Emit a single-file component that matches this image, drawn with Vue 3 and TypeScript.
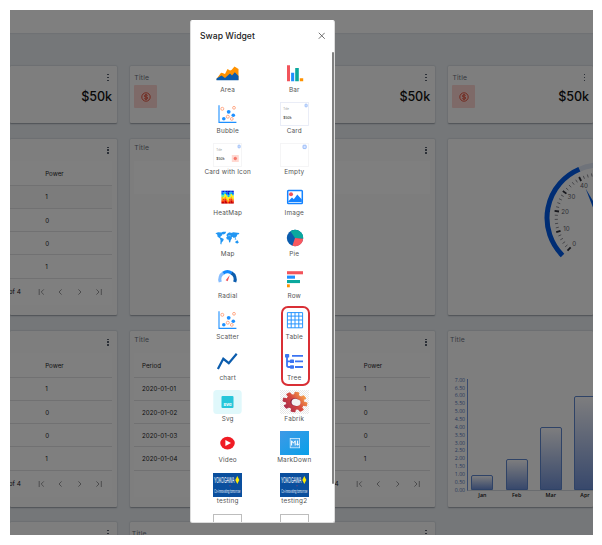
<script setup lang="ts">
interface Widget { kind: string; label: string }

const widgets: Widget[] = [
  { kind: 'area', label: 'Area' }, { kind: 'bar', label: 'Bar' },
  { kind: 'scatter', label: 'Bubble' }, { kind: 'card', label: 'Card' },
  { kind: 'cardicon', label: 'Card with Icon' }, { kind: 'empty', label: 'Empty' },
  { kind: 'heat', label: 'HeatMap' }, { kind: 'image', label: 'Image' },
  { kind: 'map', label: 'Map' }, { kind: 'pie', label: 'Pie' },
  { kind: 'radial', label: 'Radial' }, { kind: 'row', label: 'Row' },
  { kind: 'scatter', label: 'Scatter' }, { kind: 'table', label: 'Table' },
  { kind: 'chart', label: 'chart' }, { kind: 'tree', label: 'Tree' },
  { kind: 'svg', label: 'Svg' }, { kind: 'gear', label: 'Fabrik' },
  { kind: 'video', label: 'Video' }, { kind: 'md', label: 'MarkDown' },
  { kind: 'yoko', label: 'testing' }, { kind: 'yoko', label: 'testing2' },
  { kind: 'frame', label: '' }, { kind: 'frame', label: '' },
]

const rows = [
  ['2020-01-01', '1'], ['2020-01-02', '0'], ['2020-01-03', '0'], ['2020-01-04', '1'],
]
const tables = [
  { id: 't1', full: false, area: 'r2c1' },
  { id: 't2', full: false, area: 'r3c1' },
  { id: 't3', full: true, area: 'r3c2' },
]
const stats = [
  { area: 'r1c1', full: false },
  { area: 'r1c2', full: true },
  { area: 'r1c3', full: true },
]

const axis = Array.from({ length: 15 }, (_, i) => (7 - i * 0.5).toFixed(2))
const months = [
  { name: 'Jan', v: 1 }, { name: 'Feb', v: 2 }, { name: 'Mar', v: 4 }, { name: 'Apr', v: 6 },
]

const polar = (v: number, r: number) => {
  const a = ((135 + v * 2.7) * Math.PI) / 180
  return { x: 152 + r * Math.cos(a), y: 79 + r * Math.sin(a) }
}
const arc = (from: number, to: number, r: number) => {
  const a = polar(from, r)
  const b = polar(to, r)
  return `M${a.x} ${a.y}A${r} ${r} 0 ${to - from > 66 ? 1 : 0} 1 ${b.x} ${b.y}`
}
const ticks = Array.from({ length: 51 }, (_, i) => {
  const major = i % 5 === 0
  const a = polar(i * 2, major ? 41.5 : 42.2)
  const b = polar(i * 2, major ? 46 : 45.3)
  return { major, a, b }
})
const marks = [0, 10, 20, 30, 40].map((n) => ({ n, p: polar(n, n === 0 ? 36.5 : 35.3) }))

const heatColors = ['#0018c8', '#0050ff', '#00b8e8', '#70f080', '#ffee00', '#ffa000', '#ff3800', '#c80000']
const heat = Array.from({ length: 64 }, (_, i) => {
  const x = i % 8
  const y = Math.floor(i / 8)
  const shift = [0, 0, 1, 0, -1, 0, 1, 0][x] + ((x * 5 + y * 3) % 4 === 0 ? 1 : 0)
  return { x: 8.4 + x * 1.53, y: 5.7 + y * 1.6, c: heatColors[Math.max(0, Math.min(7, y + shift))] }
})
</script>

<template>
  <main class="shot">
    <header class="topbar"></header>
    <section class="board">
      <article v-for="s in stats" :key="s.area" class="card stat" :class="s.area">
        <div class="head"><span v-if="s.full" class="title">Title</span><span class="dots"><i /><i /><i /></span></div>
        <div class="stat-body">
          <div v-if="s.full" class="coin">
            <svg viewBox="0 0 10 10"><circle cx="5" cy="5" r="4.2" /><path d="M6.7 3.6Q6.3 2.8 5 2.8T3.4 3.9T5 5T6.7 6.1T5 7.2T3.3 6.3M5 2V8" /></svg>
          </div>
          <strong>$50k</strong>
        </div>
      </article>

      <article v-for="t in tables" :key="t.id" class="card grid-card" :class="[t.area, { partial: !t.full }]">
        <div class="head tall"><span v-if="t.full" class="title">Title</span><span class="dots"><i /><i /><i /></span></div>
        <div class="panel">
          <div class="tr th"><span v-if="t.full">Period</span><span>Power</span></div>
          <div v-for="r in rows" :key="r[0]" class="tr"><span v-if="t.full">{{ r[0] }}</span><span>{{ r[1] }}</span></div>
          <div class="pager">
            <span>of 4</span>
            <svg viewBox="0 0 66 8">
              <path d="M1.2 1V7M5.8 1.4L3.2 4L5.8 6.6M23.6 1.4L21 4L23.6 6.6M40.4 1.4L43 4L40.4 6.6M58.4 1.4L61 4L58.4 6.6M63.3 1V7" />
            </svg>
          </div>
        </div>
      </article>

      <article class="card r2c2">
        <div class="head tall"><span class="title">Title</span><span class="dots"><i /><i /><i /></span></div>
        <div class="panel blank"></div>
      </article>

      <article class="card r2c3">
        <svg class="gauge" width="304" height="176" viewBox="0 0 304 176">
          <path :d="arc(40.8, 100, 53)" stroke="#dfe6f5" stroke-width="5" fill="none" />
          <path :d="arc(0, 41.5, 53)" stroke="#005be8" stroke-width="5" fill="none" />
          <line
            v-for="(t, i) in ticks" :key="i" :x1="t.a.x" :y1="t.a.y" :x2="t.b.x" :y2="t.b.y"
            :stroke="t.major ? '#30303a' : '#70707a'" :stroke-width="t.major ? 1.8 : 0.8"
          />
          <text v-for="m in marks" :key="m.n" :x="m.p.x" :y="m.p.y + 1.8" text-anchor="middle">{{ m.n }}</text>
          <path d="M137.6 49.5L154.5 78L149.5 80Z" fill="#005be8" />
        </svg>
      </article>

      <article class="card r3c3 chart-card">
        <span class="title">Title</span>
        <div class="chart">
          <div class="axis"><span v-for="a in axis" :key="a">{{ a }}</span></div>
          <div class="plot">
            <div v-for="m in months" :key="m.name" class="col">
              <div class="vbar" :style="{ height: m.v * 15.72 + 'px' }"></div>
              <span>{{ m.name }}</span>
            </div>
          </div>
        </div>
      </article>

      <article class="card r4c1"><div class="head"><span class="dots"><i /><i /><i /></span></div></article>
      <article class="card r4c2"><div class="head"><span class="title">Title</span><span class="dots"><i /><i /><i /></span></div></article>
    </section>

    <div class="backdrop"></div>

    <div class="modal">
      <div class="modal-head">
        <h1>Swap Widget</h1>
        <svg viewBox="0 0 8 8"><path d="M.8.8L7.2 7.2M7.2.8L.8 7.2" /></svg>
      </div>
      <div class="modal-body">
        <div v-for="(w, i) in widgets" :key="i" class="widget">
          <svg viewBox="0 0 29 24">
            <template v-if="w.kind === 'area'">
              <path d="M3.5 18L8 11.8L9.5 12L12 13L14.5 8L17 9.5L18.5 9L21.5 5.5L25.5 8V19H3.5Z" fill="#ff9200" />
              <path d="M3.5 17.5L8.5 14.5L12 17L17 12.5L19 14.5L21.8 11.3L25.5 15V19.3H3.5Z" fill="#0b5cad" />
            </template>
            <template v-else-if="w.kind === 'bar'">
              <path d="M7 4.3H10V20.3H7Z" fill="#f2545b" /><path d="M11.1 11.7H14.2V20.3H11.1Z" fill="#1e90ff" />
              <path d="M15.2 7H18.8V20.3H15.2Z" fill="#0aa89e" /><path d="M19.8 17.3H23.2V20.3H19.8Z" fill="#ff9200" />
            </template>
            <template v-else-if="w.kind === 'scatter'">
              <path d="M6 3.2V20.4H23.4" fill="none" stroke="#1e90ff" stroke-width="1.1" />
              <g fill="#1e90ff"><circle cx="15.7" cy="9.8" r="1.9" /><circle cx="20.3" cy="13.2" r="1.8" /><circle cx="10.8" cy="16.8" r="1.8" /></g>
              <g fill="#fff" stroke="#ff8a5c" stroke-width=".7"><circle cx="9.3" cy="6.8" r="1.5" /><circle cx="21" cy="5.8" r="1.4" /><circle cx="14.8" cy="14.7" r="1.5" /><circle cx="18.8" cy="16.9" r="1.4" /></g>
            </template>
            <template v-else-if="w.kind === 'card' || w.kind === 'cardicon' || w.kind === 'empty'">
              <rect x=".5" y=".5" width="28" height="23" fill="#fff" :stroke="w.kind === 'card' ? '#e8ecf7' : '#f4f4f6'" stroke-width=".9" />
              <rect v-if="w.kind === 'empty'" x="23" y="2.2" width="3.2" height="3.4" rx=".6" fill="#d7e5ff" stroke="#7ba7f5" stroke-width=".7" />
              <rect v-else x="25" y="2.2" width="2.2" height="2.6" rx=".4" fill="#d7e5ff" stroke="#7ba7f5" stroke-width=".6" />
              <template v-if="w.kind !== 'empty'">
                <text x="3.2" y="8.2" font-size="2.8" fill="#999">Title</text>
                <text x="3.2" y="17.2" font-size="3.4" font-weight="500" fill="#444">$50k</text>
              </template>
              <template v-if="w.kind === 'cardicon'"><rect x="18.8" y="12" width="7" height="7" rx=".6" fill="#ffd9d2" /><circle cx="22.3" cy="15.5" r="1.3" fill="#f7796b" stroke="#ee5548" stroke-width=".5" /></template>
            </template>
            <template v-else-if="w.kind === 'heat'">
              <rect v-for="(h, k) in heat" :key="k" :x="h.x" :y="h.y" width="1.65" height="1.7" :fill="h.c" />
            </template>
            <template v-else-if="w.kind === 'image'">
              <rect x="7.7" y="5.5" width="14.6" height="13" rx=".8" fill="#fff" stroke="#1583ff" stroke-width="1.5" />
              <path d="M8.3 16.3L12 12.6L13.8 14.2L17.3 9.6L21.8 14.5V17H8.3Z" fill="#1583ff" /><circle cx="11" cy="9.2" r="2" fill="#f2545b" />
            </template>
            <template v-else-if="w.kind === 'map'">
              <path fill="#2196f3" d="M2.4 7.2L5.2 6.2L8.4 6.5L10 5.7L13.2 5.8L12.4 7.5L10.7 8.4L9.6 8.1L9.1 9.2L7.9 10.2L7 11.2L8.8 12L10.8 13L10.1 15L8.8 16.3L8.3 18.4L7.4 18L7.5 14.2L6.8 12.2L4.6 10.8L4.2 8.4ZM13.7 10L13.5 8.8L15 7.1L17 6.2L18 7L20.4 6.3L26.4 7L25.8 8.3L24.4 8.5L23.5 10.8L22.5 11.1L23 13.2L22 12.4L21 11L20.5 12.3L19.6 10.8L18.7 11.3L18.9 12.6L17.8 14L17.2 16.2L16.2 16.5L15.6 13.8L13.8 13.2L13.2 11.5L14.4 10.3ZM22.4 15.5L24.5 14.3L25.8 16.4L24.6 17.6L22.5 16.9ZM21.4 13L23.8 14L22.3 14.1Z" />
              <path d="M15 9.8L17 9.6L18 10.3" stroke="#fff" stroke-width=".4" fill="none" />
            </template>
            <template v-else-if="w.kind === 'pie'">
              <circle cx="15" cy="12" r="8.2" fill="#0b5cad" />
              <path d="M15 12L10.4 5.2A8.2 8.2 0 0 1 23.2 12.8Z" fill="#0aa89e" /><path d="M15 12L23.2 12.8A8.2 8.2 0 0 1 12.4 19.8Z" fill="#f9595f" />
            </template>
            <template v-else-if="w.kind === 'radial'">
              <path d="M7.3 15A7.4 7.4 0 0 1 10.5 6" fill="none" stroke="#86bdff" stroke-width="3.2" />
              <path d="M10.3 6.1A7.4 7.4 0 0 1 18.6 6.1" fill="none" stroke="#1288ff" stroke-width="3.2" />
              <path d="M18.5 6A7.4 7.4 0 0 1 21.7 15" fill="none" stroke="#0b5cad" stroke-width="3.2" />
              <path d="M12.7 13.2L16.8 8.1L14.7 14.2Z" fill="#f2545b" />
            </template>
            <template v-else-if="w.kind === 'row'">
              <path d="M7 4.2H23V7.3H7Z" fill="#f2545b" /><path d="M7 8.6H15V11.7H7Z" fill="#1e90ff" />
              <path d="M7 13H20V16.1H7Z" fill="#0aa89e" /><path d="M7 17.3H9.8V20.3H7Z" fill="#ff9200" />
            </template>
            <template v-else-if="w.kind === 'table'">
              <path d="M7.4 4.6H22.6V19.8H7.4ZM11.2 4.6V19.8M15 4.6V19.8M18.8 4.6V19.8M7.4 8.1H22.6M7.4 12H22.6M7.4 15.9H22.6" fill="none" stroke="#1e90ff" stroke-width=".95" />
            </template>
            <template v-else-if="w.kind === 'chart'">
              <path d="M4.9 20L10.3 9.8L15.8 14.2L23.7 4.8" fill="none" stroke="#0b5cad" stroke-width="2.2" />
            </template>
            <template v-else-if="w.kind === 'tree'">
              <path d="M7 7V16.2Q7 18 8.8 18H11M7 12.3H11M12 6.8H23M15 12.3H23M15 18H23" fill="none" stroke="#3b74f2" stroke-width="1.8" />
              <g fill="#3b74f2"><rect x="5" y="5" width="4.2" height="3.6" rx=".7" /><rect x="10" y="10.6" width="4" height="3.5" rx=".7" /><rect x="10" y="16.2" width="4" height="3.5" rx=".7" /></g>
            </template>
            <template v-else-if="w.kind === 'svg'">
              <rect x=".3" width="28.4" height="24" rx="3.5" fill="#e0f8fb" /><rect x="8.5" y="5.9" width="12" height="12.2" rx="1" fill="#26c6da" />
              <text x="14.5" y="16" text-anchor="middle" font-size="3.8" font-weight="800" fill="#fff">SVG</text>
            </template>
            <template v-else-if="w.kind === 'gear'">
              <defs>
                <pattern id="chk" width="2" height="2" patternUnits="userSpaceOnUse"><path d="M0 0H2V2H0Z" fill="#fff" /><path d="M0 0H1V1H0ZM1 1H2V2H1Z" fill="#e8e8e8" /></pattern>
                <linearGradient id="gg" gradientUnits="userSpaceOnUse" x1="-8" y1="8" x2="8" y2="-8"><stop offset="0" stop-color="#a82c4c" /><stop offset=".5" stop-color="#d5483f" /><stop offset="1" stop-color="#f6a04c" /></linearGradient>
                <mask id="gm" maskUnits="userSpaceOnUse" x="-13" y="-13" width="26" height="26"><g fill="#fff"><rect v-for="n in 8" :key="n" x="-2.2" y="-11" width="4.4" height="5" rx=".9" :transform="`rotate(${n * 45})`" /><circle r="8.3" /></g></mask>
              </defs>
              <rect width="29" height="24" fill="url(#chk)" />
              <g transform="translate(15 12) rotate(12) scale(1.13 .93)">
                <rect x="-13" y="-13" width="26" height="26" fill="url(#gg)" mask="url(#gm)" />
                <ellipse cx=".3" cy=".2" rx="4.5" ry="4.2" fill="#8b2345" /><ellipse cx="1" cy=".2" rx="4" ry="3.8" fill="#f2f2f2" />
              </g>
            </template>
            <template v-else-if="w.kind === 'video'">
              <ellipse cx="14.5" cy="12.1" rx="7.3" ry="6.3" fill="#f01c24" /><path d="M12.4 9.1L18 12.1L12.4 15.1Z" fill="#fff" />
            </template>
            <template v-else-if="w.kind === 'md'">
              <defs><linearGradient id="mdg" x1="0" y1="0" x2="1" y2="1"><stop offset="0" stop-color="#3f99e6" /><stop offset="1" stop-color="#08a0e9" /></linearGradient></defs>
              <rect width="29" height="24" fill="url(#mdg)" /><rect x="10.2" y="7.4" width="9.4" height="9.4" fill="#4aa8ec" stroke="#d8efff" stroke-width=".8" />
              <path d="M11.6 14.5V9.8L13.4 12.2L15.2 9.8V14.5M17.6 9.6V14M16.3 12.7L17.6 14.3L18.9 12.7" fill="none" stroke="#fff" stroke-width="1" />
            </template>
            <template v-else-if="w.kind === 'yoko'">
              <rect width="29" height="24" fill="#0a4f9e" />
              <text x="1" y="9.9" font-size="8.2" textLength="20.5" lengthAdjust="spacingAndGlyphs" fill="#fff">YOKOGAWA</text>
              <path d="M24.3 3.1L26.3 7L24.3 10.9L22.3 7Z" fill="#ffec00" /><circle cx="17" cy="12.8" r=".5" fill="#d33b5a" />
              <text x="1.3" y="19.6" font-size="5.2" textLength="26" lengthAdjust="spacingAndGlyphs" fill="#e7f0fa">Co-innovating tomorrow</text>
            </template>
            <rect v-else x=".5" y=".5" width="28" height="23" fill="#fff" stroke="#bdbdbd" />
          </svg>
          <span>{{ w.label }}</span>
        </div>
      </div>
      <div class="thumb"></div>
      <div class="mark"></div>
    </div>
  </main>
</template>

<style>
body { margin: 0; background: #fff; }
</style>

<style scoped>
.shot { position: relative; box-sizing: border-box; width: 583px; height: 525px; margin: 10px; overflow: hidden; background: #eaeef3; font-family: Inter, "Open Sans", sans-serif; }
.topbar { height: 23px; background: #fff; box-shadow: 0 1px 1px #dfe2e8; }
.board { display: grid; margin-top: 33px; width: 583px; grid-template-columns: 107px 305.6px 145.4px; grid-template-rows: 57px 176px 176px 60px; column-gap: 12.5px; row-gap: 16px; }
.card { box-sizing: border-box; background: #fdfdfd; border-radius: 1px; box-shadow: 0 .5px 1.5px #999fa8; padding: 0 5px 0 4.8px; overflow: hidden; }
.r1c1 { grid-area: 1 / 1; } .r1c2 { grid-area: 1 / 2; } .r1c3 { grid-area: 1 / 3; padding-right: 4px; }
.r2c1 { grid-area: 2 / 1; } .r2c2 { grid-area: 2 / 2; } .r2c3 { grid-area: 2 / 3; padding: 0; }
.r3c1 { grid-area: 3 / 1; } .r3c2 { grid-area: 3 / 2; } .r3c3 { grid-area: 3 / 3; }
.r4c1 { grid-area: 4 / 1; margin-top: -1px; } .r4c2 { grid-area: 4 / 2; margin-top: -1px; padding-left: 2.3px; }
.partial { padding-left: 0; }
.head { display: flex; justify-content: space-between; height: 19px; padding-top: 6.5px; box-sizing: border-box; }
.tall { height: 22px; padding-top: 3.5px; }
.title { font-size: 6.8px; line-height: 10px; color: #6f7480; letter-spacing: .2px; }
.dots { display: flex; flex-direction: column; gap: 1.8px; padding: 1.5px 3.5px 0 0; margin-left: auto; }
.tall .dots { padding-top: 4px; }
.dots i { width: 1.2px; height: 1.2px; background: #59606e; }
.stat-body { display: flex; justify-content: space-between; align-items: center; height: 23px; }
.coin { width: 23px; height: 23px; border-radius: 1px; background: #fdd5d0; display: flex; align-items: center; justify-content: center; }
.coin svg { width: 10px; height: 10px; fill: none; stroke: #e2452f; stroke-width: .9; }
.stat-body strong { margin-left: auto; font-size: 12.6px; line-height: 15px; font-weight: 500; color: #111; letter-spacing: -.1px; }
.panel { background: #fff; height: 144px; font-size: 6.2px; color: #1b1b25; }
.blank { height: 33px; }
.r2c2 { background: #fbfbfb; }
.tr { display: grid; grid-template-columns: 221.7px 1fr; align-items: center; box-sizing: border-box; height: 23.3px; padding: .6px 0 0 7.8px; border-bottom: 1px solid #e3e3e5; }
.partial .tr { grid-template-columns: 1fr; padding-left: 35.2px; }
.th { height: 24.5px; }
.r2c1 .tr:nth-child(2) { background: #f8f8f8; }
.pager { display: flex; align-items: center; justify-content: flex-end; gap: 17px; height: 26px; padding-right: 8.5px; font-size: 6.5px; white-space: nowrap; }
.partial .pager span { margin-left: 0; }
.partial .pager { gap: 16.5px; }
.pager svg { width: 66px; height: 8px; flex: none; fill: none; stroke: #8c8c90; stroke-width: .9; }
.gauge { display: block; }
.gauge text { font-size: 6.2px; fill: #62626c; }
.chart-card { padding: 3.5px 0 0 2.5px; }
.chart-card .title { display: block; }
.chart { display: flex; margin-top: 31.2px; }
.axis { display: flex; flex-direction: column; flex: none; width: 15px; margin-top: 1px; text-align: right; }
.axis span { height: 7.86px; line-height: 7.86px; font-family: "Open Sans", sans-serif; font-size: 5.2px; color: #4f74b8; }
.plot { display: flex; flex: none; align-items: flex-end; gap: 12.2px; box-sizing: border-box; height: 112px; width: 260px; margin: 3.6px 0 0 2px; padding-left: 3.3px; border-left: 1.5px solid #7195dc; border-bottom: 1px solid #d5d8df; }
.col { position: relative; width: 22px; }
.vbar { box-sizing: border-box; border: 1px solid #5f86cf; border-radius: 2px 2px 0 0; background: linear-gradient(#fafafd, #7091d8); }
.col span { position: absolute; top: 100%; left: 0; width: 22px; margin-top: 1px; text-align: center; font-family: "Open Sans", sans-serif; font-size: 5.4px; line-height: 8px; color: #111; font-weight: 600; }
.backdrop { position: absolute; inset: 0; background: rgba(0, 0, 0, .5); }
.modal { position: absolute; left: 180px; top: 10px; width: 145px; height: 503px; box-sizing: border-box; background: #fff; border-radius: 2.5px; border: 1px solid #dcdcdc; border-top-color: #fff; overflow: hidden; }
.modal-head { display: flex; justify-content: space-between; align-items: center; height: 30px; padding: 0 9px; box-sizing: border-box; }
.modal-head h1 { margin: 0; font-size: 8.6px; font-weight: 500; color: #222; letter-spacing: .03px; }
.modal-head svg { width: 7.5px; height: 7.5px; fill: none; stroke: #555; stroke-width: .9; }
.modal-body { display: grid; grid-template-columns: 66.6px 66.6px; grid-auto-rows: 41.15px; margin: 10.2px 0 0 3.4px; }
.widget { display: flex; flex-direction: column; align-items: center; }
.widget svg { width: 29px; height: 24px; flex: none; }
.widget span { margin-top: .7px; line-height: 9px; font-size: 6.4px; color: #555; letter-spacing: .2px; white-space: nowrap; }
.thumb { position: absolute; right: 0; top: 31px; width: 2px; height: 432px; border-radius: 1px; background: #808080; }
.mark { position: absolute; left: 90px; top: 285px; width: 29px; height: 80px; box-sizing: border-box; border: 2px solid #d92f35; border-radius: 7px; }
</style>
